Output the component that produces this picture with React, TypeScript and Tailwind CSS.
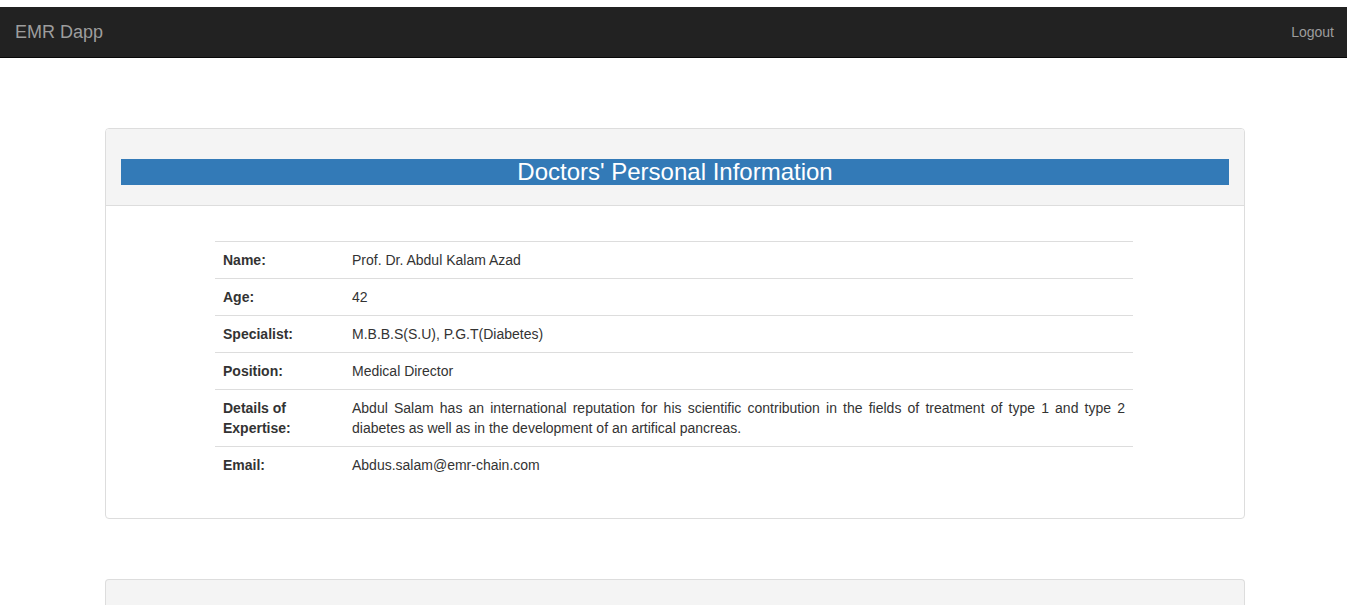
import React from "react";

const rows: { label: React.ReactNode; value: string }[] = [
  { label: "Name:", value: "Prof. Dr. Abdul Kalam Azad" },
  { label: "Age:", value: "42" },
  { label: "Specialist:", value: "M.B.B.S(S.U), P.G.T(Diabetes)" },
  { label: "Position:", value: "Medical Director" },
  {
    label: (
      <>
        Details of
        <br />
        Expertise:
      </>
    ),
    value:
      "Abdul Salam has an international reputation for his scientific contribution in the fields of treatment of type 1 and type 2 diabetes as well as in the development of an artifical pancreas.",
  },
  { label: "Email:", value: "Abdus.salam@emr-chain.com" },
];

export default function App() {
  return (
    <div
      className="min-h-[605px] bg-white text-[14px] leading-[20px] text-[#333]"
      style={{ fontFamily: '"Liberation Sans", Arial, sans-serif' }}
    >
      <div className="h-[7px]" />
      <nav className="flex h-[51px] items-center justify-between border-b border-[#080808] bg-[#222] px-[15px]">
        <span className="text-[18px] leading-[20px] text-[#9d9d9d]">EMR Dapp</span>
        <span className="mr-[-2px] text-[14px] text-[#9d9d9d]">Logout</span>
      </nav>

      <div className="pl-[105px] pr-[102px] pt-[70px]">
        <div className="rounded-[4px] border border-[#ddd] bg-white">
          <div className="rounded-t-[3px] border-b border-[#ddd] bg-[#f4f4f4] px-[15px] pb-[10px] pt-[30px]">
            <h2 className="mb-[10px] bg-[#337ab7] text-center text-[24px] leading-[26px] text-white">
              Doctors' Personal Information
            </h2>
          </div>
          <div className="px-[15px] pb-[35px] pt-[35px]">
            <div className="ml-[94px] w-[918px]">
              <table className="w-full border-collapse">
                <tbody>
                  {rows.map((r, i) => (
                    <tr key={i}>
                      <td className="w-[129px] border-t border-[#ddd] px-[8px] py-[8px] align-top font-bold">
                        {r.label}
                      </td>
                      <td className="border-t border-[#ddd] px-[8px] py-[8px] text-justify align-top">
                        {r.value}
                      </td>
                    </tr>
                  ))}
                </tbody>
              </table>
            </div>
          </div>
        </div>

        <div className="mt-[60px] h-[40px] rounded-t-[4px] border border-b-0 border-[#ddd] bg-[#f4f4f4]" />
      </div>
    </div>
  );
}
